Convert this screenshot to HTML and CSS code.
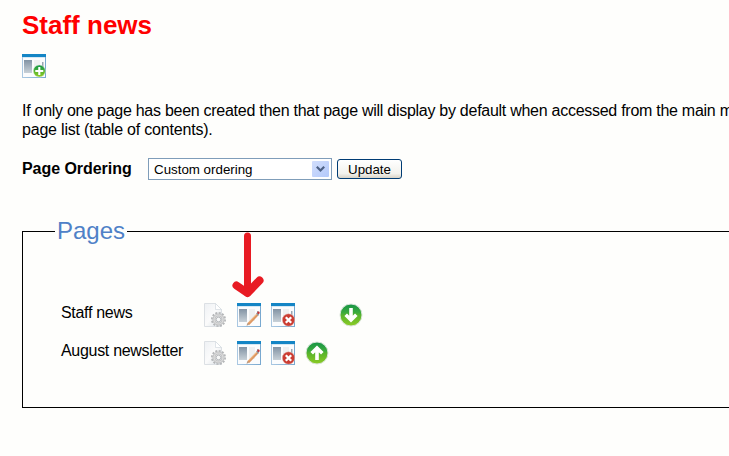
FILE: index.html
```
<!DOCTYPE html>
<html lang="en">
<head>
<meta charset="utf-8">
<title>Staff news</title>
<link rel="stylesheet" href="styles.css">
</head>
<body>
<svg class="defs" aria-hidden="true">
  <defs>
    <linearGradient id="pane" x1="0" y1="0" x2="0" y2="1"><stop offset="0" stop-color="#8293a4"/><stop offset="1" stop-color="#c8d1d8"/></linearGradient>
    <linearGradient id="frame" x1="0" y1="0" x2="1" y2="0"><stop offset="0" stop-color="#aac8e2"/><stop offset="1" stop-color="#79a9d0"/></linearGradient>
    <linearGradient id="green" x1="0" y1="0" x2="0" y2="1"><stop offset="0" stop-color="#159447"/><stop offset=".4" stop-color="#3cab3c"/><stop offset=".5" stop-color="#57b32c"/><stop offset="1" stop-color="#8dcc25"/></linearGradient>
    <linearGradient id="sheet" x1="0" y1="0" x2="1" y2="1"><stop offset="0" stop-color="#eef1f4"/><stop offset=".5" stop-color="#fbfbfb"/><stop offset="1" stop-color="#d8dfe5"/></linearGradient>
    <symbol id="window" viewBox="0 0 24 24">
      <rect x=".5" y=".5" width="23" height="23" fill="#fbfcfd" stroke="url(#frame)"/>
      <rect width="24" height="3" fill="#1485c5"/>
      <rect x="1" y="3" width="22" height="1" fill="#d5e8f4"/>
      <rect x="2" y="6" width="8" height="13" fill="url(#pane)"/>
      <rect x="12" y="6" width="6" height="12" fill="#eff0f1"/>
      <rect x="20" y="8" width="1.5" height="5" fill="#9ba6b2"/>
    </symbol>
    <symbol id="add" viewBox="0 0 24 24">
      <use href="#window"/>
      <circle cx="17.3" cy="17" r="6" fill="url(#green)" stroke="#d8e8d2" stroke-width=".5"/>
      <path d="M17.3 13v8M13.3 17h8" stroke="#fff" stroke-width="2.1"/>
    </symbol>
    <symbol id="edit" viewBox="0 0 24 24">
      <use href="#window"/>
      <path d="M11.300 21.200l8.900-9.400" stroke="#dc9763" stroke-width="2.600"/>
      <path d="M11.600 19.800l8.300-8.800" stroke="#f4bd85" stroke-width=".9"/>
      <path d="M9.500 22.800l.9-2.800 1.800 1.800z" fill="#b79b83"/>
      <path d="M20 11.500l1.100-1.200" stroke="#8d979f" stroke-width="2.600"/>
      <circle cx="21.500" cy="9.700" r="1.200" fill="#c93535"/>
    </symbol>
    <symbol id="delete" viewBox="0 0 24 24">
      <use href="#window"/>
      <circle cx="17.500" cy="17" r="6.200" fill="#cb3c32" stroke="#e7c1bb" stroke-width=".5"/>
      <path d="M14.800 14.300l5.400 5.400M20.200 14.300l-5.400 5.400" stroke="#fff" stroke-width="2.300"/>
    </symbol>
    <symbol id="settings" viewBox="0 0 24 24">
      <path d="M1.500 .5H12.500L18.500 6.500V23.500H1.500z" fill="url(#sheet)" stroke="#dce0e4"/>
      <path d="M12.500 .5V6.500h6z" fill="#fff" stroke="#d3dae0" stroke-width=".7"/>
      <circle cx="15.500" cy="16.500" r="6.600" fill="none" stroke="#b4b6b8" stroke-width="1.800" stroke-dasharray="2.060 1.395"/>
      <circle cx="15.500" cy="16.500" r="4.500" fill="none" stroke="#c3c4c5" stroke-width="3.200"/>
      <circle cx="15.500" cy="16.500" r="4.500" fill="none" stroke="#dedede" stroke-width="1.200"/>
      <circle cx="15.500" cy="16.500" r="2.300" fill="#f7f8f8" stroke="#abadb0" stroke-width=".8"/>
    </symbol>
    <symbol id="down" viewBox="0 0 24 24">
      <circle cx="12" cy="12" r="11" fill="url(#green)" stroke="#dbe5db"/>
      <path d="M12 5v11.500M6.700 11.700l5.300 5.300 5.300-5.300" fill="none" stroke="#fff" stroke-width="3.600"/>
    </symbol>
    <symbol id="up" viewBox="0 0 24 24">
      <circle cx="12" cy="12" r="11" fill="url(#green)" stroke="#dbe5db"/>
      <path d="M12 19V7.500M6.700 12.300L12 7l5.300 5.300" fill="none" stroke="#fff" stroke-width="3.600"/>
    </symbol>
  </defs>
</svg>
<main>
  <h1>Staff news</h1>
  <svg class="icon add-page"><use href="#add"/></svg>
  <p class="intro">If only one page has been created then that page will display by default when accessed from the main m<br><span class="second-line">page list (table of contents).</span></p>
  <div class="ordering">
    <label>Page Ordering</label>
    <div class="select"><span>Custom ordering</span>
      <span class="drop"><svg viewBox="0 0 17 16"><path d="M4.800 5.800l3.700 3.700 3.700-3.700" fill="none" stroke="#4d6185" stroke-width="2.200"/></svg></span>
    </div>
    <button>Update</button>
  </div>
  <fieldset>
    <legend>Pages</legend>
    <div class="row">
      <span class="name">Staff news</span>
      <svg class="icon"><use href="#settings"/></svg>
      <svg class="icon"><use href="#edit"/></svg>
      <svg class="icon"><use href="#delete"/></svg>
      <span></span>
      <svg class="icon"><use href="#down"/></svg>
    </div>
    <div class="row">
      <span class="name">August newsletter</span>
      <svg class="icon"><use href="#settings"/></svg>
      <svg class="icon"><use href="#edit"/></svg>
      <svg class="icon"><use href="#delete"/></svg>
      <svg class="icon"><use href="#up"/></svg>
    </div>
    <svg class="pointer" viewBox="0 0 34 68"><path d="M16.500 5v57" stroke-width="7"/><path d="M5.500 54.500L16.500 62 28.500 49.500" stroke-width="8"/><path d="M13 56l3.500 4 5-5z" stroke-width="2"/></svg>
  </fieldset>
</main>
</body>
</html>
```
FILE: styles.css
```
* { box-sizing: border-box; }
body {
  margin: 0;
  height: 456px;
  overflow: hidden;
  background: #fefefc;
  color: #000;
  font: 16px/19px "Liberation Sans", Arial, sans-serif;
}
.defs { position: absolute; width: 0; height: 0; }
main { padding: 10px 0 0 22px; }
h1 {
  margin: 0;
  color: #f00;
  font-size: 26px;
  line-height: 30px;
}
.icon { display: block; width: 24px; height: 24px; }
.add-page { margin-top: 14px; }
.intro { margin: 23px 0 0; white-space: nowrap; letter-spacing: -0.27px; }
.second-line { letter-spacing: -0.2px; }
.ordering {
  display: flex;
  align-items: center;
  margin-top: 19px;
  height: 22px;
}
.ordering label {
  width: 126px;
  padding-bottom: 2px;
  font-weight: bold;
  letter-spacing: -0.05px;
}
.select {
  display: flex;
  align-items: center;
  justify-content: space-between;
  width: 184px;
  height: 22px;
  padding: 0 2px 0 5px;
  border: 1px solid #7f9db9;
  background: #fff;
  font-size: 13.33px;
}
.drop {
  width: 17px;
  height: 16px;
  border-radius: 1px;
  background: linear-gradient(135deg, #d2defc, #b3c9fb);
}
.drop svg { display: block; width: 17px; height: 16px; }
button {
  width: 65px;
  height: 20px;
  margin-left: 5px;
  padding: 1px 0 0;
  border: 1px solid #003c74;
  border-radius: 3px;
  background: linear-gradient(#fff, #f3f2ed 75%, #d9d3c7);
  color: #000;
  font: 13.33px/17px "Liberation Sans", Arial, sans-serif;
}
fieldset {
  position: relative;
  height: 190px;
  margin: 38px 0 0;
  padding: 58px 0 0 38px;
  border: 1px solid #000;
  border-right: 0;
}
legend {
  margin-left: -6px;
  padding: 0 2px;
  color: #4f81c7;
  font-size: 24px;
  line-height: 25px;
  padding-bottom: 2px;
}
.row {
  display: grid;
  grid-template-columns: 142px repeat(5, 34px);
  align-items: start;
  height: 38px;
}
.name { letter-spacing: -0.3px; white-space: nowrap; }
.pointer {
  position: absolute;
  left: 208px;
  top: -14px;
  width: 34px;
  height: 68px;
  fill: none;
  stroke: #e81b23;
  stroke-linecap: round;
  stroke-linejoin: round;
}
```
